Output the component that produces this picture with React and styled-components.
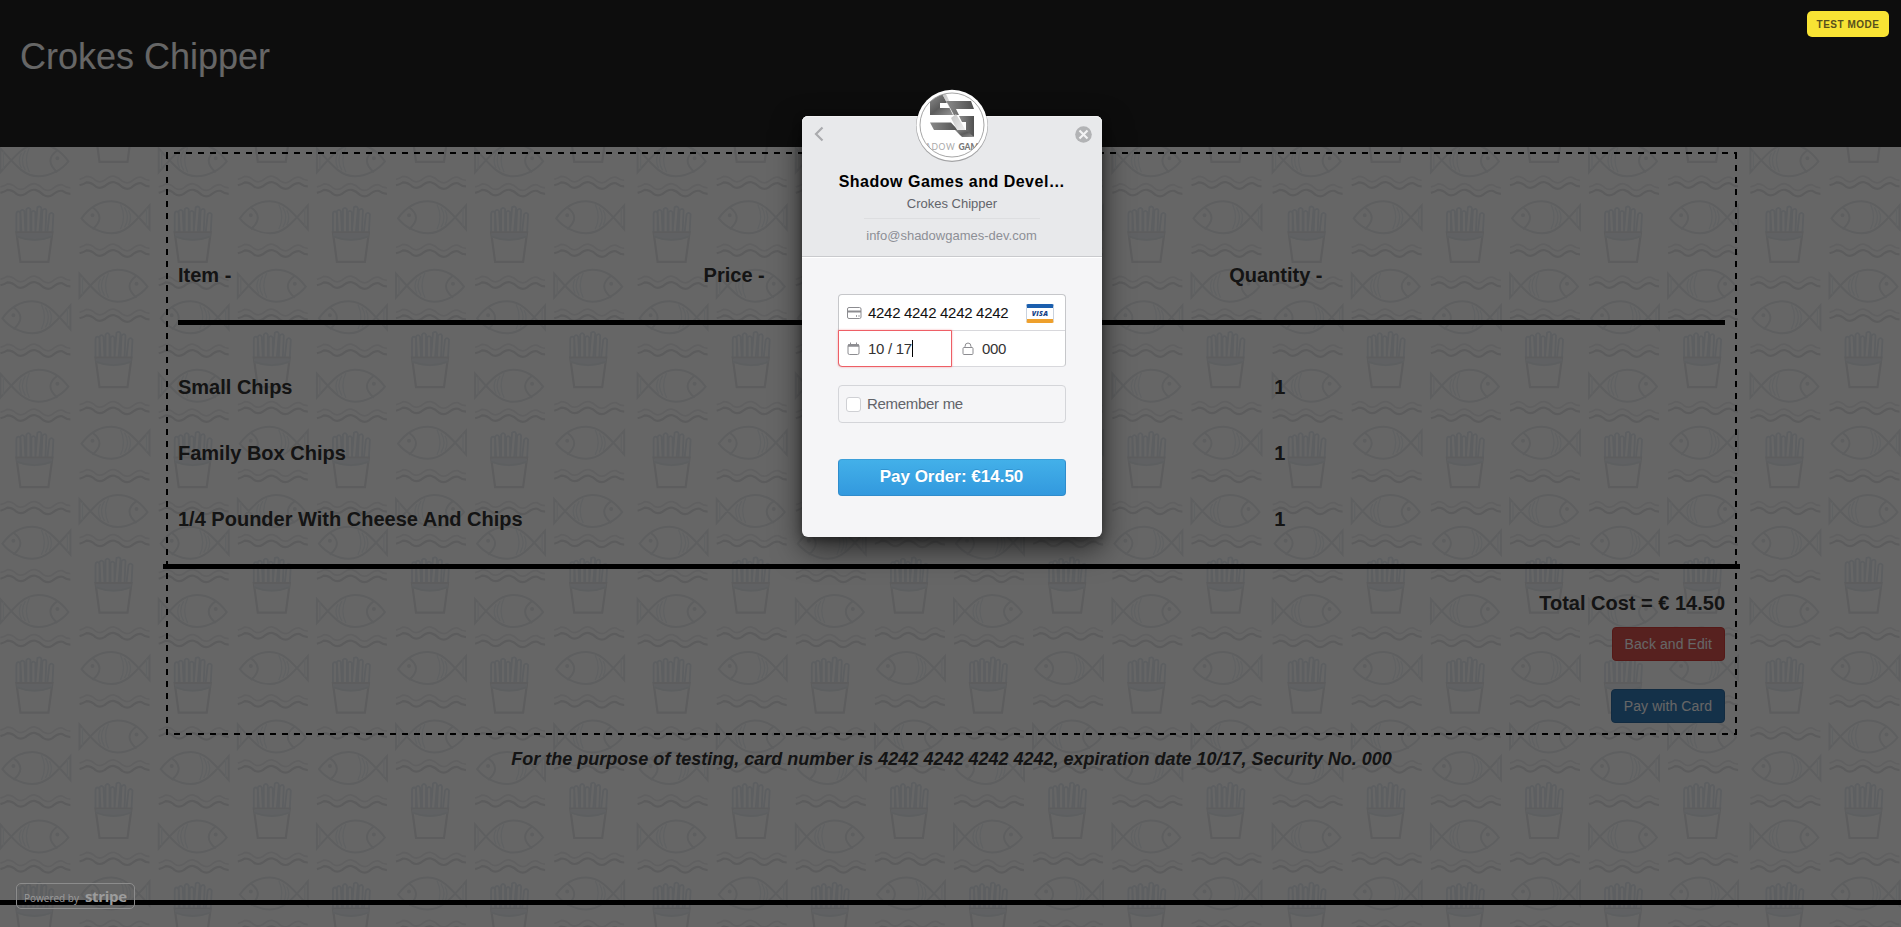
import React from 'react';
import styled, { createGlobalStyle } from 'styled-components';

const GlobalStyle = createGlobalStyle`
  * { box-sizing: border-box; }
  body {
    margin: 0;
    overflow: hidden;
    background: #fff;
    color: #333;
    font-family: "Liberation Sans", Arial, sans-serif;
    font-size: 14px;
    line-height: 20px;
  }
`;

/* ---------- page ---------- */

const Page = styled.div`
  position: relative;
  height: 927px;
  overflow: hidden;
`;

const Backdrop = styled.svg`
  position: absolute;
  inset: 0;
  display: block;
`;

const Content = styled.div`
  position: relative;
  height: 100%;
  display: flex;
  flex-direction: column;
`;

const Banner = styled.header`
  flex: none;
  height: 147px;
  padding: 37px 20px;
  background: #222;
`;

const BrandName = styled.h1`
  margin: 0;
  color: #fff;
  font-size: 36px;
  line-height: 40px;
  font-weight: 400;
`;

/* Dashed frame drawn with even 6px dashes and 6px gaps on all four sides. */
const OrderBox = styled.section`
  flex: none;
  width: 1571px;
  height: 583px;
  margin: 5px 0 0 166px;
  padding: 2px 12px;
  background-image:
    linear-gradient(90deg, #000 50%, transparent 50%),
    linear-gradient(90deg, #000 50%, transparent 50%),
    linear-gradient(#000 50%, transparent 50%),
    linear-gradient(#000 50%, transparent 50%);
  background-size: 12px 2px, 12px 2px, 2px 12px, 2px 12px;
  background-position: 8px 0, 8px 100%, 0 1px, 100% 1px;
  background-repeat: repeat-x, repeat-x, repeat-y, repeat-y;
`;

const Columns = styled.div`
  display: grid;
  grid-template-columns: repeat(3, 525.6px);
  font-size: 20px;
  line-height: 22px;
  font-weight: 700;
`;

const HeadRow = styled(Columns)`
  padding-top: 110px;
`;

const ItemRow = styled(Columns)`
  margin-bottom: 44px;
`;

const Quantity = styled.div`
  padding-left: 45px;
`;

const Rule = styled.hr`
  height: 5px;
  border: 0;
  background: #000;
  margin: ${(p) => p.$margin};
`;

const Summary = styled.div`
  display: flex;
  flex-direction: column;
  align-items: flex-end;
  padding-top: 23px;
`;

const Total = styled.div`
  font-size: 20px;
  line-height: 22px;
  font-weight: 700;
`;

const Button = styled.button`
  height: 34px;
  margin-top: ${(p) => p.$gap}px;
  padding: 6px 12px;
  border: 1px solid ${(p) => p.$edge};
  border-radius: 4px;
  background: ${(p) => p.$fill};
  color: #fff;
  font: 400 14px/20px "Liberation Sans", Arial, sans-serif;
  letter-spacing: 0.08px;
`;

const Note = styled.p`
  margin: 14px 0 0 2px;
  text-align: center;
  font-size: 18px;
  line-height: 20px;
  font-weight: 700;
  font-style: italic;
`;

/* ---------- overlay ---------- */

const Overlay = styled.div`
  position: absolute;
  inset: 0;
  padding: 116px 0 0 802px;
  background: rgba(0, 0, 0, 0.6);
`;

const TestBadge = styled.div`
  position: absolute;
  top: 11px;
  right: 12px;
  width: 82px;
  height: 26px;
  border-radius: 5px;
  background: #f8e334;
  color: #57501c;
  font-size: 10px;
  font-weight: 700;
  letter-spacing: 0.5px;
  line-height: 27px;
  text-align: center;
  white-space: nowrap;
`;

const Dialog = styled.div`
  position: relative;
  width: 300px;
  height: 421px;
  border-radius: 6px;
  background: #f5f5f7;
  box-shadow: 0 12px 30px rgba(0, 0, 0, 0.6), 0 3px 10px rgba(0, 0, 0, 0.35);
`;

const DialogHead = styled.div`
  height: 141px;
  padding-top: 56px;
  border-bottom: 1px solid #c9cacd;
  border-radius: 6px 6px 0 0;
  background: #e8e9eb;
  box-shadow: inset 0 1px #f1f1f2, 0 1px #fff;
  text-align: center;
`;

const Merchant = styled.div`
  color: #000;
  font-size: 16px;
  line-height: 19px;
  font-weight: 700;
  letter-spacing: 0.5px;
`;

const Product = styled.div`
  margin: 4px 62px 0;
  padding-bottom: 5px;
  border-bottom: 1px solid #dddee0;
  color: #62646a;
  font-size: 13px;
  line-height: 18px;
`;

const Email = styled.div`
  padding: 8px 1px 0 0;
  color: #8d8f96;
  font-size: 13px;
  line-height: 18px;
`;

const Logo = styled.svg`
  position: absolute;
  left: 110px;
  top: -30px;
`;

const HeadIcon = styled.svg`
  position: absolute;
  top: ${(p) => p.$top}px;
  left: ${(p) => p.$left}px;
`;

const Form = styled.div`
  padding: 37px 36px 0;
`;

const Fieldset = styled.div`
  display: grid;
  grid-template-columns: 113px 1fr;
  grid-template-rows: 36px 35px;
  border: 1px solid #c6c7ca;
  border-bottom-color: #d8d8dc;
  border-radius: 4px;
  background: #fff;
`;

const Field = styled.div`
  display: flex;
  align-items: center;
  grid-column: ${(p) => (p.$wide ? '1 / 3' : 'auto')};
  border-bottom: ${(p) => (p.$wide ? '1px solid #d8d8dc' : '0')};
  padding-left: ${(p) => (p.$inset ? p.$inset : 8)}px;
  color: ${(p) => (p.$dark ? '#111' : '#333')};
  font-size: 15px;
  letter-spacing: -0.3px;
  ${(p) =>
    p.$invalid &&
    `margin: -1px 0 -1px -1px; border: 1px solid #ee5f66; border-radius: 0 0 0 4px;
     box-shadow: 0 0 2px rgba(240, 90, 96, .6);`}
`;

const FieldIcon = styled.svg`
  flex: none;
  width: 15px;
  height: 16px;
  margin-right: 6px;
`;

const Caret = styled.span`
  width: 1px;
  height: 17px;
  background: #000;
`;

const VisaCard = styled.span`
  display: block;
  width: 28px;
  height: 19px;
  margin: 2px 11px 0 auto;
  border: 1px solid #c9d2de;
  border-top: 4px solid #1b5fae;
  border-bottom: 4px solid #eea02c;
  border-radius: 2px;
  background: #fff;
  color: #153f87;
  font: italic 800 7px/11px "Open Sans", sans-serif;
  letter-spacing: 0.3px;
  text-align: center;
`;

const Remember = styled.label`
  display: flex;
  align-items: center;
  height: 38px;
  margin-top: 18px;
  padding-left: 7px;
  border: 1px solid #d4d5d9;
  border-radius: 4px;
  color: #62646a;
  font-size: 15px;
  letter-spacing: -0.3px;
`;

const Checkbox = styled.span`
  width: 15px;
  height: 15px;
  margin-right: 6px;
  border: 1px solid #cfd0d4;
  border-radius: 3px;
  background: #fff;
`;

const PayButton = styled.button`
  display: block;
  width: 100%;
  height: 37px;
  margin-top: 36px;
  padding: 0 1px 2px 0;
  border: 1px solid #2f8ccc;
  border-top-color: #3c9fd9;
  border-radius: 4px;
  background: linear-gradient(#43b0e9, #3299de);
  color: #fff;
  font: 700 17px/33px "Liberation Sans", Arial, sans-serif;
  text-shadow: 0 -1px rgba(0, 60, 120, 0.2);
`;

const StripeBadge = styled.div`
  position: absolute;
  left: 16px;
  top: 883px;
  display: flex;
  align-items: baseline;
  width: 119px;
  height: 26px;
  padding-left: 7px;
  border: 1px solid #8c8c8c;
  border-radius: 5px;
  color: #9c9c9c;
  font: 400 10px/24px "Open Sans", sans-serif;
  white-space: nowrap;
`;

const StripeName = styled.b`
  margin-left: 6px;
  font-size: 15px;
  font-weight: 700;
  letter-spacing: -0.3px;
`;

/* ---------- background pattern ---------- */

const COLUMN_X = [-123.9, 34.4, 192.7, 350.9, 509.1, 671.6, 829.8, 988, 1146.4, 1306.6, 1464.9, 1623, 1784.4];
const PERIOD = 225.4;

function Motif({ x, y }) {
  return (
    <g transform={`translate(${x} ${y})`}>
      <use href="#fries" />
      <use href="#waves" y="77" />
      <use href="#fish" y="111" />
      <use href="#waves" y="145" />
      <use href="#fish" transform="translate(2 179.4) scale(-1 1)" />
      <use href="#waves" y="210" />
    </g>
  );
}

function Pattern() {
  const rows = [-1, 0, 1, 2, 3];
  return (
    <Backdrop width="1901" height="927">
      <defs>
        <g id="fries" fill="none" stroke="#e9edf1" strokeWidth="1.8">
          <path d="M-18 26V8q0-3 2-3t2 3V26M-13 26L-14 5q2-3 4 0L-9 26M-8 26V3q2-3 4 0V26M-3 26V6q2-3 4 0V26M1 26L3 1q3-2 4 1L5 26M7 26L8 4q3-3 4 0L11 26M13 26L15 8q2-3 4 0L18 26" stroke="#e8edf3" />
          <path d="M-18 26H18L14 55.5H-14Z" stroke="#e8e9eb" strokeWidth="2.2" />
          <path d="M-18 27H18L17.5 31Q0 38-17.5 31Z" fill="#eff3f8" stroke="none" />
          <path d="M-18 30Q0 37 18 30" />
        </g>
        <g id="fish" fill="none" stroke="#ecedef" strokeWidth="2">
          <path d="M-32 1C-24-10-13-16-2-16C12-16 20-6 36 12V-12C20 6 12 16-2 16C-13 16-25 10-32 1Z" />
          <path d="M-21-10Q-7 0-21 12" />
          <path d="M7-13Q13 0 7 12M11-10Q17 0 11 10M15-7Q19 0 15 8M33-9V9" strokeWidth="1.3" stroke="#f1f4f7" />
          <circle cx="-21" cy="-2" r="1" />
        </g>
        <g id="waves" fill="none" strokeWidth="1.8">
          <path d="M-34-4Q-30-5-27-7Q-22-7-18-3Q-14 0-9-3Q-3-8 1-7Q5-6 9-2Q14 1 18-2Q24-7 28-6Q32-3 36-3" stroke="#f1f1f2" />
          <path d="M-34 2Q-30 1-27-1Q-22-1-18 3Q-14 6-9 3Q-3-2 1-1Q5 0 9 4Q14 7 18 4Q24-1 28 0Q32 3 36 3" stroke="#e6e7e8" strokeWidth="2.2" />
        </g>
      </defs>
      {COLUMN_X.map((x) =>
        rows.map((r) => (
          <React.Fragment key={`${x}:${r}`}>
            <Motif x={x} y={206.3 + PERIOD * r} />
            <Motif x={x + 79.1} y={106.3 + PERIOD * r} />
          </React.Fragment>
        ))
      )}
    </Backdrop>
  );
}

function MerchantLogo() {
  return (
    <Logo width="80" height="80" viewBox="0 0 80 80">
      <defs>
        <clipPath id="disc"><circle cx="40" cy="39" r="32" /></clipPath>
        <linearGradient id="steelA" x1="0" y1="0" x2="1" y2="1">
          <stop offset="0" stopColor="#8a8a8a" />
          <stop offset=".5" stopColor="#5c5c5c" />
          <stop offset="1" stopColor="#999" />
        </linearGradient>
        <linearGradient id="steelB" x1="0" y1="0" x2="1" y2="0">
          <stop offset="0" stopColor="#8a8a8a" />
          <stop offset="1" stopColor="#505050" />
        </linearGradient>
        <linearGradient id="shine" x1="0" y1="0" x2="1" y2="1">
          <stop offset="0" stopColor="#c4c4c4" />
          <stop offset="1" stopColor="#f8f8f8" />
        </linearGradient>
      </defs>
      <circle cx="40" cy="40" r="36" fill="#000" opacity=".3" />
      <circle cx="40" cy="39.3" r="35.5" fill="#fff" />
      <g clipPath="url(#disc)">
        <path d="M18 9H31L35 17H28V22H38L42 29H18Z" fill="url(#steelA)" />
        <path d="M30 8H34L43 27L41 29L35 17Z" fill="url(#shine)" />
        <path d="M34 15H59L62 23H44L47 29H42L36 18Z" fill="url(#steelB)" />
        <path d="M18 36.5H39L46 44H22Z" fill="url(#steelB)" />
        <path d="M39 32L44 28L50 38L54 45L48 50L44 42Z" fill="url(#shine)" />
        <path d="M47 30H62V51L54 47V36H50Z" fill="url(#steelB)" />
        <path d="M43 44H54L62 51H50Z" fill="url(#steelA)" />
        <text x="13" y="64" fontSize="8.5" letterSpacing=".7" fontFamily="Lato, sans-serif" fill="#aaa">ADOW</text>
        <text x="46.5" y="64" fontSize="8.5" fontWeight="900" fontFamily="Lato, sans-serif" fill="#777">GAM</text>
      </g>
      <circle cx="40" cy="39" r="32" fill="none" stroke="#8f8f8f" strokeWidth=".8" />
    </Logo>
  );
}

const items = ['Small Chips', 'Family Box Chips', '1/4 Pounder With Cheese And Chips'];

export default function App() {
  return (
    <Page>
      <GlobalStyle />
      <Pattern />
      <Content>
        <Banner>
          <BrandName>Crokes Chipper</BrandName>
        </Banner>
        <OrderBox>
          <HeadRow>
            <div>Item -</div>
            <div>Price -</div>
            <div>Quantity -</div>
          </HeadRow>
          <Rule $margin="34px 0 51px" />
          {items.map((name) => (
            <ItemRow key={name}>
              <div>{name}</div>
              <div />
              <Quantity>1</Quantity>
            </ItemRow>
          ))}
          <Rule $margin="-10px -15px 0" />
          <Summary>
            <Total>Total Cost = € 14.50</Total>
            <Button $gap={13} $fill="#d9534f" $edge="#d43f3a">Back and Edit</Button>
            <Button $gap={28} $fill="#337ab7" $edge="#2e6da4">Pay with Card</Button>
          </Summary>
        </OrderBox>
        <Note>
          For the purpose of testing, card number is 4242 4242 4242 4242, expiration date 10/17, Security No. 000
        </Note>
        <Rule $margin="auto 0 22px" />
      </Content>

      <Overlay>
        <Dialog>
          <DialogHead>
            <Merchant>Shadow Games and Devel…</Merchant>
            <Product>Crokes Chipper</Product>
            <Email>info@shadowgames-dev.com</Email>
          </DialogHead>
          <MerchantLogo />
          <HeadIcon $left={11} $top={10} width="12" height="16">
            <path d="M9.5 1.5L3 8l6.5 6.5" fill="none" stroke="#aaabae" strokeWidth="2.2" />
          </HeadIcon>
          <HeadIcon $left={273} $top={10} width="18" height="18">
            <circle cx="8.5" cy="8.5" r="8.3" fill="#b2b3b5" />
            <path d="M4.5 4.5l8 8M12.5 4.5l-8 8" stroke="#f3f3f4" strokeWidth="2.2" />
          </HeadIcon>
          <Form>
            <Fieldset>
              <Field $wide $dark>
                <FieldIcon viewBox="0 0 15 16" fill="none" stroke="#8c8c90">
                  <rect x=".5" y="2.5" width="13.5" height="11" rx="1.5" />
                  <path d="M1 6.5H14" strokeWidth="2" />
                  <path d="M9.5 10v2M12 10v2" strokeWidth=".8" />
                </FieldIcon>
                4242 4242 4242 4242
                <VisaCard>VISA</VisaCard>
              </Field>
              <Field $invalid>
                <FieldIcon viewBox="0 0 15 16" fill="none" stroke="#8c8c90">
                  <rect x="1" y="3.5" width="11" height="10" rx="1.5" />
                  <path d="M1 4.5H12" strokeWidth="2.5" />
                  <path d="M3.5 1.5V4M9.5 1.5V4" />
                </FieldIcon>
                10 / 17
                <Caret />
              </Field>
              <Field $inset={9}>
                <FieldIcon viewBox="0 0 15 16" fill="none" stroke="#8c8c90">
                  <rect x="2" y="6.5" width="10" height="7" rx="1" />
                  <path d="M4 6.5V5.5Q4 2 7 2T10 5.5V6.5" />
                </FieldIcon>
                000
              </Field>
            </Fieldset>
            <Remember>
              <Checkbox />
              Remember me
            </Remember>
            <PayButton>Pay Order: €14.50</PayButton>
          </Form>
        </Dialog>
        <TestBadge>TEST MODE</TestBadge>
        <StripeBadge>
          Powered by
          <StripeName>stripe</StripeName>
        </StripeBadge>
      </Overlay>
    </Page>
  );
}
